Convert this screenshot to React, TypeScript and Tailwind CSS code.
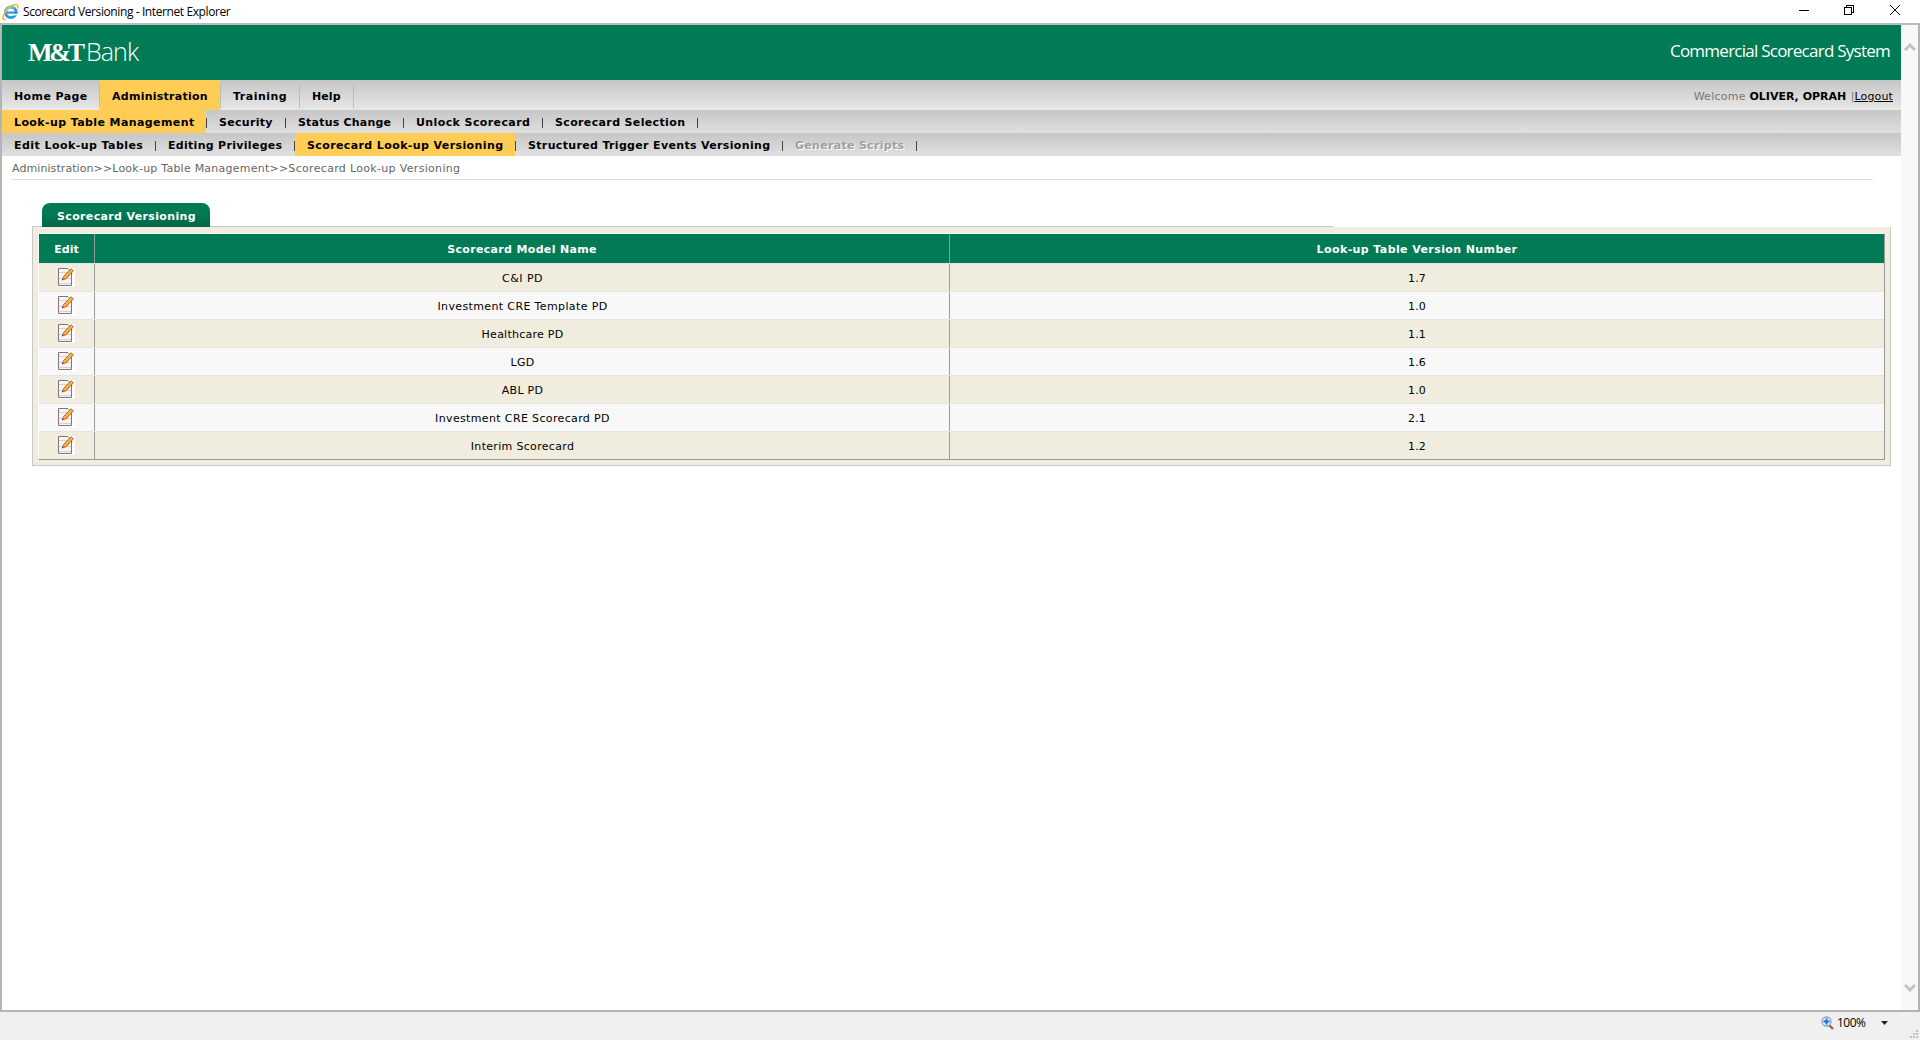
import React from "react";

const ui = "font-['Verdana','DejaVu_Sans',sans-serif] text-[11px] leading-4";

type Tab = { label: string; cell: string; text: string; active?: boolean; disabled?: boolean };

const primary: Tab[] = [
  { label: "Home Page", cell: "w-[97px]", text: "tracking-[0.41px]" },
  { label: "Administration", cell: "w-[120px]", text: "tracking-[0.26px]", active: true },
  { label: "Training", cell: "w-[78px]", text: "tracking-[0.5px]" },
  { label: "Help", cell: "w-[53px]", text: "tracking-[0.1px]" },
];
const secondary: Tab[] = [
  { label: "Look-up Table Management", cell: "w-[204px]", text: "tracking-[0.4px]", active: true },
  { label: "Security", cell: "w-[78px]", text: "tracking-[0.3px]" },
  { label: "Status Change", cell: "w-[117px]", text: "tracking-[0.2px]" },
  { label: "Unlock Scorecard", cell: "w-[138px]", text: "tracking-[0.4px]" },
  { label: "Scorecard Selection", cell: "w-[154px]", text: "tracking-[0.36px]" },
];
const tertiary: Tab[] = [
  { label: "Edit Look-up Tables", cell: "w-[153px]", text: "tracking-[0.44px]" },
  { label: "Editing Privileges", cell: "w-[138px]", text: "tracking-[0.3px]" },
  { label: "Scorecard Look-up Versioning", cell: "w-[220px]", text: "tracking-[0.39px]", active: true },
  { label: "Structured Trigger Events Versioning", cell: "w-[266px]", text: "tracking-[0.34px]" },
  { label: "Generate Scripts", cell: "w-[133px]", text: "tracking-[0.3px]", disabled: true },
];

const rows = [
  ["C&I PD", "1.7", "tracking-[0.45px]"],
  ["Investment CRE Template PD", "1.0", "tracking-[0.37px]"],
  ["Healthcare PD", "1.1", "tracking-[0.25px]"],
  ["LGD", "1.6", "tracking-[0.3px]"],
  ["ABL PD", "1.0", "tracking-[0.25px]"],
  ["Investment CRE Scorecard PD", "2.1", "tracking-[0.36px]"],
  ["Interim Scorecard", "1.2", "tracking-[0.32px]"],
];

function SubNav({ items }: { items: Tab[] }) {
  return (
    <nav className="flex h-[23px] shrink-0 items-stretch bg-linear-to-b from-[#c6c6c6] to-[#e0e0e0] font-bold">
      {items.map((t) => (
        <React.Fragment key={t.label}>
          <a className={`flex items-center pt-[2px] pl-3 whitespace-nowrap ${t.cell} ${t.active ? "bg-[#ffcc55]" : ""} ${t.disabled ? "text-[#a0a0a0] [text-shadow:1px_1px_0_#fff]" : ""}`}>
            <span className={t.text}>{t.label}</span>
          </a>
          <i className="mt-2 h-[10px] w-px shrink-0 bg-[#444]" />
        </React.Fragment>
      ))}
    </nav>
  );
}

function IeIcon() {
  return (
    <svg width="17" height="18" viewBox="0 0 17 18" fill="none">
      <circle cx="8.800" cy="9.300" r="5.300" stroke="#2f97da" strokeWidth="3" />
      <path d="M10 10.900h6v1.500h-6z" fill="#fff" />
      <path d="M5 9.600h10.400" stroke="#2f97da" strokeWidth="2.200" />
      <path d="M3.200 9a5.600 5.600 0 0 1 9.500-3.700" stroke="#86d0f6" strokeWidth="1.100" />
      <path d="M3.600 16.400C1 17.300.1 15.300 1.800 11.600 4.100 6.700 10.500 1.100 14.300 1.500c1.800.2 1.900 2.100 1.100 4" stroke="#f2bb2a" strokeWidth="1.600" />
    </svg>
  );
}

function EditIcon() {
  return (
    <svg width="17" height="19" viewBox="0 0 17 19" fill="none">
      <path d="M0 0H17V19H0z" fill="#fff" />
      <path d="M.5.500H10L13.500 4V17.500H.500z" fill="#f3f5f7" stroke="#77787c" />
      <path d="M1 4.500h9M1 10.500h12M1 15.500h12" stroke="#f7c3c3" />
      <path d="M4.300 11.800l1-3L13 .8l2.500 2-7.700 8.200z" fill="#f5a52c" stroke="#a5682a" strokeWidth=".9" />
      <path d="M6.200 9.600L13.400 2.400" stroke="#ffcf6a" />
      <path d="M3.900 12.300l.5-1.600 1.200 1z" fill="#333" />
    </svg>
  );
}

export default function App() {
  return (
    <div className={`flex h-[1040px] w-[1920px] flex-col overflow-hidden bg-white text-black ${ui}`}>
      <header className="flex h-[23px] shrink-0 items-center pl-[2px]">
        <IeIcon />
        <span className="ml-1 font-['Open_Sans',sans-serif] text-[12px] tracking-[-0.4px]">Scorecard Versioning - Internet Explorer</span>
        <svg className="ml-auto" width="121" height="23" fill="none" stroke="#000" shapeRendering="crispEdges">
          <path d="M0 10.500H10" />
          <path d="M45.500 7.500h7v7h-7zM47.500 7V5.500h7v7H53" />
          <path d="M91 5l10 10M101 5L91 15" shapeRendering="auto" />
        </svg>
      </header>

      <div className="flex h-[989px] shrink-0 border-2 border-[#b4b4b4] border-t-[#b9bcbb]">
        <main className="flex w-[1899px] flex-col">
          <div className="flex h-[55px] shrink-0 items-center justify-between bg-[#007b55] pr-[11px] pl-[26px] text-white">
            <div className="flex items-baseline pb-px whitespace-nowrap">
              <span className="font-['Liberation_Serif',serif] text-[26px] leading-none font-bold tracking-[-3.2px]">M&amp;T</span>
              <span className="ml-[4px] font-['Open_Sans',sans-serif] text-[25px] leading-none font-light tracking-[-0.9px]">Bank</span>
            </div>
            <span className="pb-1 font-['Open_Sans',sans-serif] text-[17px] tracking-[-0.75px] whitespace-nowrap">Commercial Scorecard System</span>
          </div>

          <nav className="flex h-[30px] shrink-0 bg-linear-to-b from-[#c6c6c6] to-[#e8e8e8]">
            {primary.map((t) => (
              <React.Fragment key={t.label}>
                <a className={`flex items-center pt-[3px] pl-3 font-bold whitespace-nowrap ${t.cell} ${t.active ? "bg-[#ffcc55]" : ""}`}>
                  <span className={t.text}>{t.label}</span>
                </a>
                <i className="mt-[3px] h-[25px] w-px shrink-0 bg-[#bdbdbd]" />
              </React.Fragment>
            ))}
            <div className="ml-auto flex items-center pt-[3px] pr-2 whitespace-pre text-[#777]">
              <span className="tracking-[0.25px]">Welcome </span>
              <b className="text-black">OLIVER, OPRAH</b>
              <span className="pl-px"> |</span>
              <u className="tracking-[0.15px] text-black">Logout</u>
            </div>
          </nav>
          <SubNav items={secondary} />
          <SubNav items={tertiary} />

          <div className="mr-[28px] ml-[10px] flex h-[24px] shrink-0 items-center border-b border-[#e2e2e2] pt-[2px] text-[#666]">
            <span className="tracking-[0.08px]">Administration&gt;&gt;</span>
            <span className="tracking-[0.235px]">Look-up Table Management&gt;&gt;</span>
            <span className="tracking-[0.32px]">Scorecard Look-up Versioning</span>
          </div>

          <div className="mt-[23px] ml-[30px] w-[1859px]">
            <h2 className="relative z-10 -mb-px ml-[10px] flex h-6 w-[168px] items-center rounded-t-lg bg-linear-to-b from-[#007b55] from-40% to-[#006644] pt-[3px] pl-[15px] font-bold tracking-[0.35px] whitespace-nowrap text-white">
              Scorecard Versioning
            </h2>
            <div className="flex">
              <i className="h-px w-[1301px] bg-[#c8c8c8]" />
            </div>
            <section className="border-x border-b border-[#c8c8c4] bg-[#f0ecde] px-[5px] pt-[6px] pb-[5px]">
              <div className="border border-t-white border-r-[#999] border-b-[#999] border-l-white">
                <div className="grid h-[29px] grid-cols-[56px_855px_1fr] bg-[#007b55] text-center font-bold text-white">
                  <span className="flex items-center justify-center border-r border-[#999] pt-[2px]">Edit</span>
                  <span className="flex items-center justify-center border-r border-[#999] pt-[2px] tracking-[0.33px]">Scorecard Model Name</span>
                  <span className="flex items-center justify-center pt-[2px] tracking-[0.4px]">Look-up Table Version Number</span>
                </div>
                {rows.map(([name, version, spacing]) => (
                  <div key={name} className="grid h-7 grid-cols-[56px_855px_1fr] border-t border-[#e4e4e4] text-center odd:bg-[#f8f8f8] even:bg-[#f0ecde]">
                    <span className="flex justify-center border-r border-[#999] pt-1"><EditIcon /></span>
                    <span className={`flex items-center justify-center border-r border-[#999] pt-[2px] pl-px ${spacing}`}>{name}</span>
                    <span className="flex items-center justify-center pt-[2px] tracking-[0.2px]">{version}</span>
                  </div>
                ))}
              </div>
            </section>
          </div>
        </main>

        <aside className="flex w-[17px] flex-col items-center justify-between bg-[#f8f8f8] pt-[17px] pb-[17px]">
          <svg width="12" height="10" fill="none" stroke="#c1c1c1" strokeWidth="3"><path d="M1 8l5-5 5 5" /></svg>
          <svg width="12" height="10" fill="none" stroke="#c1c1c1" strokeWidth="3"><path d="M1 2l5 5 5-5" /></svg>
        </aside>
      </div>

      <footer className="relative flex h-[28px] shrink-0 items-center justify-end bg-[#f0f0f0] pb-[6px]">
        <svg width="13" height="14" viewBox="0 0 13 14" fill="none">
          <path d="M8 9l4 4" stroke="#9a6040" strokeWidth="2.400" />
          <circle cx="5.500" cy="5.500" r="4.500" fill="#e8f3ff" stroke="#8ba4c4" strokeWidth="1.300" />
          <path d="M5.500 2.500v6M2.500 5.500h6" stroke="#1a6fd8" strokeWidth="2" />
        </svg>
        <span className="ml-[3px] w-[28px] font-['Open_Sans',sans-serif] text-[12px] tracking-[-0.5px]">100%</span>
        <svg className="mr-8 ml-4" width="7" height="4"><path d="M0 0h7L3.500 4z" fill="#222" /></svg>
        <svg className="absolute right-[2px] bottom-[2px]" width="8" height="8" fill="#bfbfbf">
          <path d="M6 0h2v2H6zM3 3h2v2H3zM6 3h2v2H6zM0 6h2v2H0zM3 6h2v2H3zM6 6h2v2H6z" />
        </svg>
      </footer>
    </div>
  );
}
